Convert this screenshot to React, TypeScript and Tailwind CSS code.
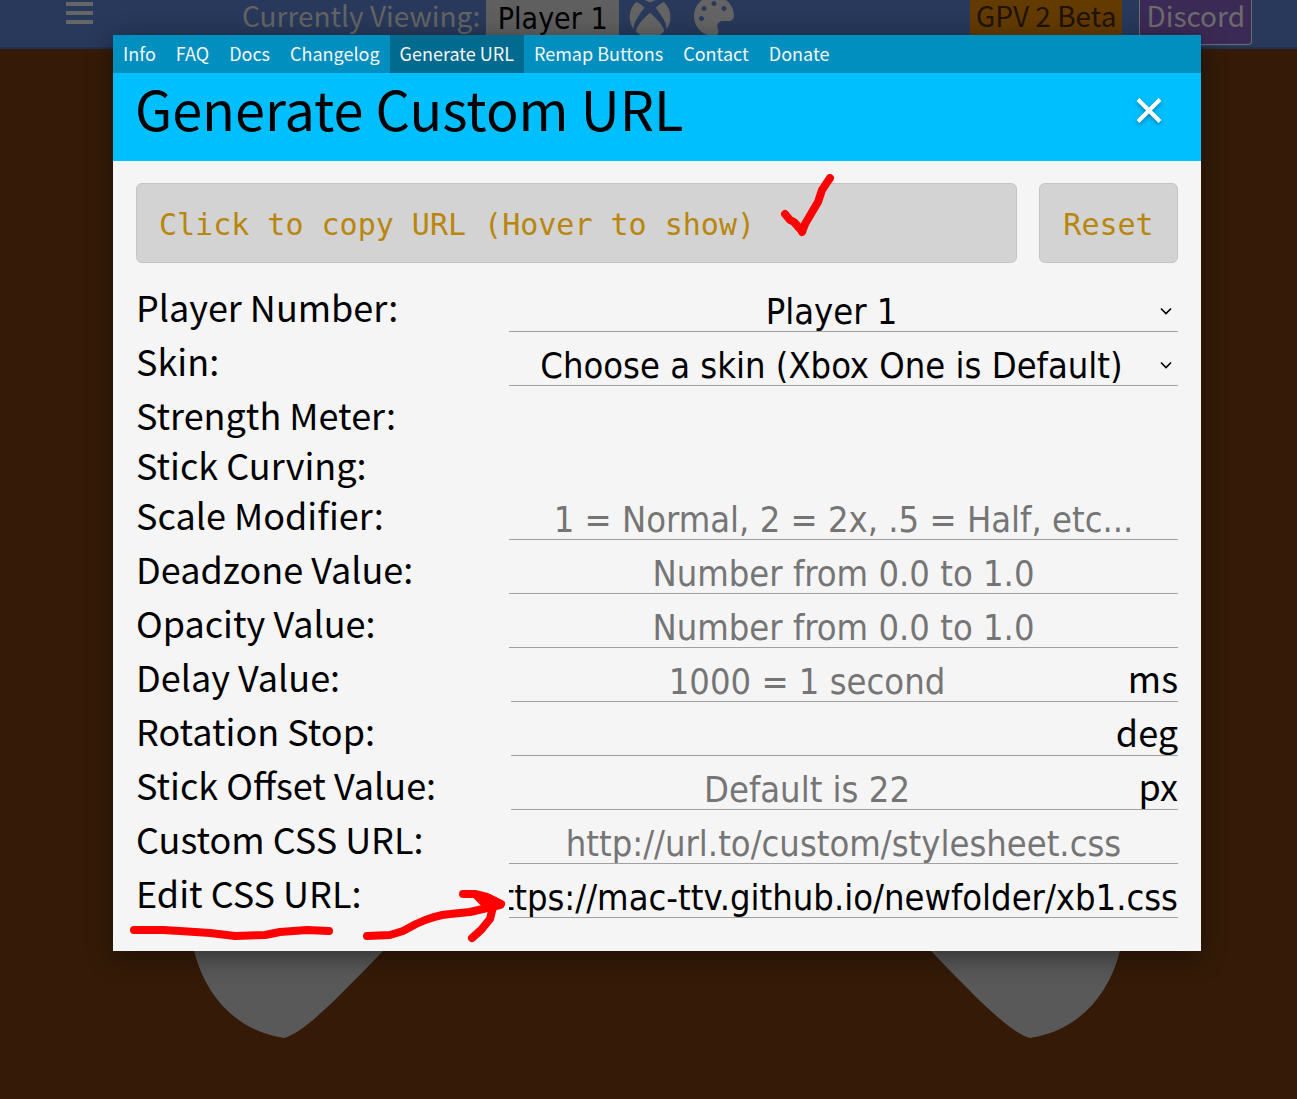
import { useEffect, useRef } from "react";
import type { ReactNode } from "react";
import { FaPalette, FaXbox } from "react-icons/fa";

const UI = "font-['Noto_Sans_CJK_SC',sans-serif]";
const FIELD = "font-['DejaVu_Sans_Condensed','DejaVu_Sans',sans-serif] text-4xl leading-[38px]";
const MONO = "font-['DejaVu_Sans_Mono',monospace]";

const tabs = ["Info", "FAQ", "Docs", "Changelog", "Generate URL", "Remap Buttons", "Contact", "Donate"];

function PageHeader() {
  return (
    <header className="flex h-[49px] items-start border-b-2 border-[#21304c] bg-[#28395b] pr-[45px] pl-[66px] text-[28px] leading-[30px] text-[#646464]">
      <button type="button" aria-label="Menu" className="mt-[2px] flex flex-col gap-[5px]">
        <span className="block h-1 w-[27px] bg-[#666]" />
        <span className="block h-1 w-[27px] bg-[#666]" />
        <span className="block h-1 w-[27px] bg-[#666]" />
      </button>
      <label htmlFor="viewing" className="ml-[149px]">Currently Viewing:</label>
      <select
        id="viewing"
        className="ml-[6px] h-9 w-[133px] appearance-none bg-[#5f5f5f] pt-px text-center font-['DejaVu_Sans_Condensed','DejaVu_Sans',sans-serif] text-[30px] leading-9 text-black"
      >
        <option>Player 1</option>
      </select>
      <button type="button" aria-label="Xbox skin" className="-mt-1 ml-[10px]">
        <FaXbox className="size-[42px]" />
      </button>
      <button type="button" aria-label="Background colour" className="-mt-1 ml-[23px]">
        <FaPalette className="size-10" />
      </button>
      <a href="#beta" className="ml-auto h-9 bg-[#633a00] px-[6px] text-[#1f1300]">GPV 2 Beta</a>
      <a href="#discord" className="ml-[17px] h-[45px] rounded-b border border-t-0 border-[#6f6f6f] bg-[#3c2a56] px-[6px] text-[#6c6c6c]">
        Discord
      </a>
    </header>
  );
}

function ControllerGrips() {
  return (
    <svg className="absolute top-[851px] left-[113px] w-[1088px]" viewBox="0 0 1088 200" fill="#595959" aria-hidden="true">
      <path d="M76 30 Q78 45 81 51 C94 102 129 132 171 138 C190 133 220 103 270 51 L290 30 Z" />
      <path d="M1012 30 Q1010 45 1007 51 C994 102 959 132 917 138 C898 133 868 103 818 51 L798 30 Z" />
    </svg>
  );
}

function Row({ id, label, children }: { id: string; label: string; children?: ReactNode }) {
  if (!children) {
    return <div className="h-[50px] text-4xl leading-[56px]">{label}</div>;
  }
  return (
    <div className="grid grid-cols-[373px_1fr] grid-rows-[54px] items-end">
      <label htmlFor={id} className="self-start text-4xl leading-[56px]">{label}</label>
      {children}
    </div>
  );
}

function Choice({ id, text }: { id: string; text: string }) {
  return (
    <div className="relative border-b border-[#a0a0a0]">
      <select id={id} className={`${FIELD} block w-full appearance-none pr-6 text-center`}>
        <option>{text}</option>
      </select>
      <svg className="pointer-events-none absolute top-[14px] right-[6px] h-2 w-3" viewBox="0 0 12 8" fill="none" stroke="#000" strokeWidth="1.6" aria-hidden="true">
        <path d="M1 1.500 L6 6.500 L11 1.500" />
      </svg>
    </div>
  );
}

function Field({ id, hint, unit }: { id: string; hint?: string; unit?: string }) {
  if (unit) {
    return (
      <div className="ml-[2px] flex border-b border-[#a0a0a0]">
        <input id={id} type="text" placeholder={hint} className={`${FIELD} min-w-0 flex-1 text-center placeholder:text-[#757575]`} />
        <span className="w-[75px] text-right text-4xl leading-7">{unit}</span>
      </div>
    );
  }
  return (
    <input
      id={id}
      type="text"
      placeholder={hint}
      className={`${FIELD} block w-full min-w-0 border-b border-[#a0a0a0] text-center placeholder:text-[#757575]`}
    />
  );
}

function EditUrl() {
  const ref = useRef<HTMLInputElement>(null);
  useEffect(() => {
    if (ref.current) ref.current.scrollLeft = ref.current.scrollWidth;
  }, []);
  return (
    <input
      ref={ref}
      id="edit"
      type="text"
      defaultValue="https://mac-ttv.github.io/newfolder/xb1.css"
      className={`${FIELD} block w-full min-w-0 border-b border-[#a0a0a0] text-center`}
    />
  );
}

export default function App() {
  return (
    <div className={`${UI} relative min-h-screen bg-[#351b07]`}>
      <PageHeader />
      <div className="absolute inset-x-0 top-[49px] bottom-0 overflow-hidden">
        <ControllerGrips />
      </div>
      <div className="absolute inset-x-0 top-0 pt-[35px] pr-24 pl-[113px]">
        <section role="dialog" aria-labelledby="title" className="bg-[#f5f5f5] text-black shadow-[0_6px_24px_rgba(0,0,0,0.45)]">
          <nav className="flex bg-[#008fbf] text-lg leading-9 text-[#f5f5f5]">
            {tabs.map((t) => (
              <a key={t} href="#tab" className={t === "Generate URL" ? "bg-[#006b8f] px-[10px] pb-[2px]" : "px-[10px] pb-[2px]"}>
                {t}
              </a>
            ))}
          </nav>
          <div className="flex h-[88px] items-start justify-between bg-[#00bfff] pr-[37px] pl-[22px]">
            <h1 id="title" className="text-[54px] leading-[70px]">Generate Custom URL</h1>
            <button type="button" aria-label="Close" className="mt-[22px]">
              <svg className="size-[30px] drop-shadow-[0_2px_2px_rgba(0,0,0,0.35)]" viewBox="0 0 30 30" stroke="#fff" strokeWidth="4" aria-hidden="true">
                <path d="M4 4.500 L26 26.500 M26 4.500 L4 26.500" />
              </svg>
            </button>
          </div>
          <div className="px-[23px] pt-[22px] pb-[33px]">
            <div className="mb-[15px] flex gap-[22px]">
              <button type="button" className={`${MONO} relative h-20 flex-1 rounded-md border border-[#c4c4c4] bg-[#d3d3d3] px-[22px] pt-[2px] text-left text-[30px] text-[#b8860b]`}>
                Click to copy URL (Hover to show)
                <svg className="absolute -top-[10px] left-[640px] h-[70px] w-[60px]" viewBox="0 0 60 70" fill="none" stroke="#f00" strokeWidth="8" strokeLinecap="round" strokeLinejoin="round" aria-hidden="true">
                  <path d="M8 40 L13 46 L17 48 L24 56 L25 58 L28 50 L41 28 L45 16 L53 4" />
                </svg>
              </button>
              <button type="button" className={`${MONO} h-20 w-[139px] rounded-md border border-[#c4c4c4] bg-[#d3d3d3] pt-[2px] text-[30px] text-[#b8860b]`}>
                Reset
              </button>
            </div>
            <form className="relative">
              <Row id="player" label="Player Number:"><Choice id="player" text="Player 1" /></Row>
              <Row id="skin" label="Skin:"><Choice id="skin" text="Choose a skin (Xbox One is Default)" /></Row>
              <Row id="meter" label="Strength Meter:" />
              <Row id="curving" label="Stick Curving:" />
              <Row id="scale" label="Scale Modifier:"><Field id="scale" hint="1 = Normal, 2 = 2x, .5 = Half, etc..." /></Row>
              <Row id="deadzone" label="Deadzone Value:"><Field id="deadzone" hint="Number from 0.0 to 1.0" /></Row>
              <Row id="opacity" label="Opacity Value:"><Field id="opacity" hint="Number from 0.0 to 1.0" /></Row>
              <Row id="delay" label="Delay Value:"><Field id="delay" hint="1000 = 1 second" unit="ms" /></Row>
              <Row id="rotation" label="Rotation Stop:"><Field id="rotation" unit="deg" /></Row>
              <Row id="offset" label="Stick Offset Value:"><Field id="offset" hint="Default is 22" unit="px" /></Row>
              <Row id="custom" label="Custom CSS URL:"><Field id="custom" hint="http://url.to/custom/stylesheet.css" /></Row>
              <Row id="edit" label="Edit CSS URL:"><EditUrl /></Row>
              <svg className="pointer-events-none absolute -bottom-[32px] -left-[16px] h-[70px] w-[400px]" viewBox="120 880 400 70" fill="none" stroke="#f00" strokeWidth="8" strokeLinecap="round" strokeLinejoin="round" aria-hidden="true">
                <path d="M134 930 L163 930 L180 931 L210 933 L235 936 L265 935 L280 932 L307 930 L329 931" />
                <path d="M367 936 L390 935 L403 931 L416 924 Q435 915 450 914 L470 912 L500 905" />
                <path d="M463 894 L475 894 L487 897 L501 904 M493 907 L490 919 L481 930 L472 938" />
                <path d="M477 896 L489 898 L501 904 L487 906 Z" fill="#f00" />
              </svg>
            </form>
          </div>
        </section>
      </div>
    </div>
  );
}
